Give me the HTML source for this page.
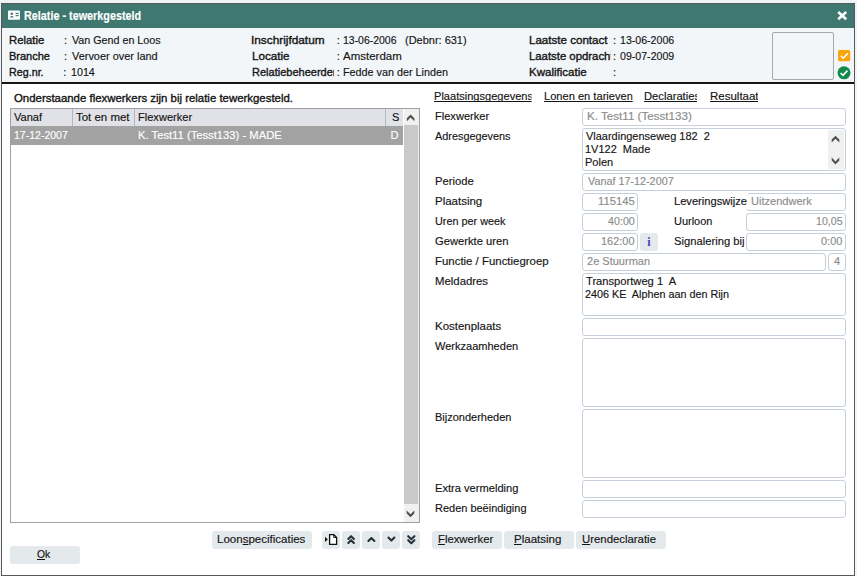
<!DOCTYPE html>
<html><head><meta charset="utf-8"><title>Relatie - tewerkgesteld</title>
<style>
*{box-sizing:border-box;margin:0;padding:0}
html,body{width:857px;height:576px;overflow:hidden;background:#f0f3f5;font-family:"Liberation Sans",sans-serif;font-size:11px;color:#141414}
.a{position:absolute;white-space:nowrap;line-height:14px;transform-origin:0 0;-webkit-text-stroke:0.15px currentColor}
.p{position:absolute}
.b{font-weight:bold}
.m{-webkit-text-stroke:0.35px currentColor}
.f{position:absolute;border:1px solid #c6d0da;border-radius:3px;background:#fff;height:18px}
.btn{position:absolute;height:18px;background:#e4e9ec;border-radius:3px}
u{text-decoration:underline;text-underline-offset:1px;text-decoration-skip-ink:none}
</style></head><body>
<div class="p" style="left:1px;top:3px;width:854px;height:573px;border:1px solid #595959;background:#fff"></div>
<div class="p" style="left:2px;top:4px;width:852px;height:24px;background:#3e7870"></div>
<div class="p" style="left:2px;top:28px;width:852px;height:55px;background:#f2f6f9"></div>
<div class="p" style="left:2px;top:82.4px;width:852px;height:1.25px;background:#161616"></div>

<!-- title icons -->
<svg class="p" style="left:8px;top:10px" width="13" height="10" viewBox="0 0 13 10"><rect x="0" y="0.4" width="12" height="9.4" rx="1" fill="#fff"/><circle cx="3.8" cy="3.7" r="1.25" fill="#3e7870"/><path d="M1.7 7.4 q2.1-2.8 4.2 0z" fill="#3e7870"/><rect x="7.6" y="2.9" width="3.2" height="1.1" fill="#3e7870"/><rect x="7.6" y="5.1" width="3.2" height="1.1" fill="#3e7870"/></svg>
<svg class="p" style="left:836px;top:10px" width="12" height="11" viewBox="0 0 12 11"><path d="M2.2 2 L10.2 9.3 M10.2 2 L2.2 9.3" stroke="#fff" stroke-width="2.6"/></svg>

<!-- header image box + status icons -->
<div class="p" style="left:772px;top:32px;width:62px;height:48px;border:1px solid #a6a8ab;border-radius:2px;background:#f2f6f9"></div>
<svg class="p" style="left:838px;top:50px" width="13" height="12" viewBox="0 0 13 12"><rect x="0" y="0" width="12.2" height="11.3" rx="1.5" fill="#f9a40a"/><path d="M2.8 5.8 L5.2 8.2 L9.8 3.4" stroke="#fff" stroke-width="1.6" fill="none"/></svg>
<svg class="p" style="left:837px;top:66px" width="14" height="14" viewBox="0 0 14 14"><circle cx="7" cy="6.8" r="6.5" fill="#0f8a4a"/><path d="M3.6 7 L6 9.4 L10.4 4.7" stroke="#fff" stroke-width="1.7" fill="none"/></svg>

<!-- grid -->
<div class="p" style="left:10px;top:108px;width:410px;height:415px;border:1px solid #a0a0a0;background:#fff"></div>
<div class="p" style="left:11px;top:109px;width:391.5px;height:17px;background:#e0e2e7"></div>
<div class="p" style="left:72px;top:109px;width:1px;height:17px;background:#b4b7bd"></div>
<div class="p" style="left:134px;top:109px;width:1px;height:17px;background:#b4b7bd"></div>
<div class="p" style="left:385px;top:109px;width:1px;height:17px;background:#b4b7bd"></div>
<div class="p" style="left:11px;top:126px;width:391.5px;height:18.6px;background:#a2a2a2"></div>
<div class="p" style="left:402.5px;top:109px;width:1.5px;height:413px;background:#fff"></div>
<div class="p" style="left:403.7px;top:109px;width:15.3px;height:413px;background:#f0f0f0"></div>
<div class="p" style="left:404.4px;top:125px;width:13.3px;height:378.6px;background:#c9c9c9"></div>
<svg class="p" style="left:400px;top:109px" width="20" height="20" viewBox="400 109 20 20"><path d="M406.8 118.3 L410.6 114.5 L414.4 118.3 V121.3 L410.6 117.5 L406.8 121.3z" fill="#4f4f4f"/></svg>
<svg class="p" style="left:400px;top:505px" width="20" height="16" viewBox="400 505 20 16"><path d="M406.7 510.4 L410.5 514.2 L414.3 510.4 V513.4 L410.5 517.2 L406.7 513.4z" fill="#4f4f4f"/></svg>

<!-- bottom-left buttons -->
<div class="btn" style="left:212px;top:531px;width:100px"></div>
<div class="btn" style="left:322px;top:531px;width:18px"></div>
<div class="btn" style="left:342px;top:531px;width:18px"></div>
<div class="btn" style="left:362px;top:531px;width:18px"></div>
<div class="btn" style="left:382px;top:531px;width:18px"></div>
<div class="btn" style="left:402px;top:531px;width:18px"></div>
<svg class="p" style="left:324px;top:533px" width="15" height="13" viewBox="0 0 15 13"><path d="M1 3.8 L3.8 6.4 L1 9z" fill="#111"/><path d="M5.6 1.7 h4.3 l2.7 2.7 v7 h-7z" stroke="#111" stroke-width="1.3" fill="#fff"/><path d="M9.8 1.8 v2.7 h2.7" stroke="#111" stroke-width="1" fill="none"/></svg>
<svg class="p" style="left:346px;top:534px" width="10" height="11" viewBox="0 0 10 11"><path d="M2.3 5 L5.1 2.2 L7.9 5 M2.3 9 L5.1 6.2 L7.9 9" stroke="#263238" stroke-width="2.1" fill="none" stroke-linecap="round" stroke-linejoin="round"/></svg>
<svg class="p" style="left:366px;top:535px" width="10" height="9" viewBox="0 0 10 9"><path d="M2.4 6 L5.4 3 L8.4 6" stroke="#263238" stroke-width="2.1" fill="none" stroke-linecap="round" stroke-linejoin="round"/></svg>
<svg class="p" style="left:386px;top:535px" width="10" height="9" viewBox="0 0 10 9"><path d="M2.4 2.6 L5.4 5.6 L8.4 2.6" stroke="#263238" stroke-width="2.1" fill="none" stroke-linecap="round" stroke-linejoin="round"/></svg>
<svg class="p" style="left:406px;top:534px" width="10" height="11" viewBox="0 0 10 11"><path d="M2.2 2.2 L5.3 5.2 L8.4 2.2 M2.2 6.2 L5.3 9.2 L8.4 6.2" stroke="#263238" stroke-width="2.1" fill="none" stroke-linecap="round" stroke-linejoin="round"/></svg>
<div class="btn" style="left:10px;top:546px;width:70px"></div>

<!-- form fields -->
<div class="f" style="left:582px;top:108px;width:264px"></div>
<div class="f" style="left:582px;top:128px;width:264px;height:43px"></div>
<div class="p" style="left:828px;top:130px;width:16px;height:38.6px;background:#f0f0f0"></div>
<svg class="p" style="left:826px;top:130px" width="20" height="40" viewBox="826 130 20 40"><path d="M831.7 139.6 L835.5 135.8 L839.3 139.6 V142.6 L835.5 138.8 L831.7 142.6z M831.7 157.6 L835.5 161.4 L839.3 157.6 V160.6 L835.5 164.4 L831.7 160.6z" fill="#4f4f4f"/></svg>
<div class="f" style="left:582px;top:173px;width:264px"></div>
<div class="f" style="left:582px;top:193px;width:56px"></div>
<div class="f" style="left:746px;top:193px;width:100px"></div>
<div class="p" style="left:740px;top:193px;width:7.6px;height:15.5px;background:#fff"></div>
<div class="f" style="left:582px;top:213px;width:56px"></div>
<div class="f" style="left:746px;top:213px;width:100px"></div>
<div class="f" style="left:582px;top:233px;width:56px"></div>
<div class="btn" style="left:640px;top:233px;width:18px"></div>
<div class="f" style="left:746px;top:233px;width:100px"></div>
<div class="f" style="left:582px;top:253px;width:244px"></div>
<div class="f" style="left:828px;top:253px;width:18px"></div>
<div class="f" style="left:582px;top:273px;width:264px;height:43px"></div>
<div class="f" style="left:582px;top:318px;width:264px"></div>
<div class="f" style="left:582px;top:338px;width:264px;height:69px"></div>
<div class="f" style="left:582px;top:409px;width:264px;height:69px"></div>
<div class="f" style="left:582px;top:480px;width:264px"></div>
<div class="f" style="left:582px;top:500px;width:264px"></div>
<div class="a" style="left:647.3px;top:234.5px;font-family:'Liberation Serif',serif;font-weight:bold;color:#4a3fc0;font-size:12px;-webkit-text-stroke:0">i</div>

<div class="btn" style="left:432px;top:531px;width:70px"></div>
<div class="btn" style="left:504px;top:531px;width:70px"></div>
<div class="btn" style="left:576px;top:531px;width:90px"></div>

<div class="a b" style="left:23.71px;top:9px;transform:scaleX(0.9013);color:#fff;font-size:12px">Relatie - tewerkgesteld</div>
<div class="a m" style="left:8.58px;top:33px;transform:scaleX(1.0278);">Relatie</div>
<div class="a" style="left:64.05px;top:33px;transform:scaleX(1.0000);">:</div>
<div class="a" style="left:71.83px;top:33px;transform:scaleX(0.9741);">Van Gend en Loos</div>
<div class="a m" style="left:8.60px;top:49px;transform:scaleX(0.9998);">Branche</div>
<div class="a" style="left:64.05px;top:49px;transform:scaleX(1.0000);">:</div>
<div class="a" style="left:71.84px;top:49px;transform:scaleX(0.9930);">Vervoer over land</div>
<div class="a m" style="left:8.62px;top:65px;transform:scaleX(0.9753);">Reg.nr.</div>
<div class="a" style="left:63.25px;top:65px;transform:scaleX(1.0000);">:</div>
<div class="a" style="left:71.47px;top:65px;transform:scaleX(0.9729);">1014</div>
<div class="a m" style="left:251.45px;top:33px;transform:scaleX(1.0741);">Inschrijfdatum</div>
<div class="a" style="left:336.85px;top:33px;transform:scaleX(1.0000);">:</div>
<div class="a" style="left:343.19px;top:33px;transform:scaleX(0.9503);">13-06-2006</div>
<div class="a" style="left:404.57px;top:33px;transform:scaleX(0.9981);">(Debnr: 631)</div>
<div class="a m" style="left:251.56px;top:49px;transform:scaleX(1.0574);">Locatie</div>
<div class="a" style="left:336.85px;top:49px;transform:scaleX(1.0000);">:</div>
<div class="a" style="left:342.94px;top:49px;transform:scaleX(1.0444);">Amsterdam</div>
<div class="a m" style="left:251.80px;top:65px;transform:scaleX(1.0014);;width:81.69px;overflow:hidden">Relatiebeheerder</div>
<div class="a" style="left:336.85px;top:65px;transform:scaleX(1.0000);">:</div>
<div class="a" style="left:343.18px;top:65px;transform:scaleX(0.9808);">Fedde van der Linden</div>
<div class="a m" style="left:528.77px;top:33px;transform:scaleX(1.0519);">Laatste contact</div>
<div class="a" style="left:613.05px;top:33px;transform:scaleX(1.0000);">:</div>
<div class="a" style="left:619.78px;top:33px;transform:scaleX(0.9629);">13-06-2006</div>
<div class="a m" style="left:528.78px;top:49px;transform:scaleX(1.0314);;width:79.14px;overflow:hidden">Laatste opdracht</div>
<div class="a" style="left:613.05px;top:49px;transform:scaleX(1.0000);">:</div>
<div class="a" style="left:619.78px;top:49px;transform:scaleX(0.9633);">09-07-2009</div>
<div class="a m" style="left:528.77px;top:65px;transform:scaleX(1.0483);">Kwalificatie</div>
<div class="a" style="left:613.05px;top:65px;transform:scaleX(1.0000);">:</div>
<div class="a m" style="left:13.71px;top:91px;transform:scaleX(1.0370);">Onderstaande flexwerkers zijn bij relatie tewerkgesteld.</div>
<div class="a" style="left:14.34px;top:110px;transform:scaleX(1.0035);">Vanaf</div>
<div class="a" style="left:76.31px;top:110px;transform:scaleX(1.0420);">Tot en met</div>
<div class="a" style="left:137.66px;top:110px;transform:scaleX(1.0058);">Flexwerker</div>
<div class="a" style="left:391.89px;top:110px;transform:scaleX(1.0000);">S</div>
<div class="a" style="left:13.98px;top:128px;transform:scaleX(0.9562);color:#fff">17-12-2007</div>
<div class="a" style="left:138.15px;top:128px;transform:scaleX(1.0207);color:#fff">K. Test11 (Tesst133) - MADE</div>
<div class="a" style="left:390.40px;top:128px;transform:scaleX(1.0000);color:#fff">D</div>
<div class="a" style="left:433.76px;top:89px;transform:scaleX(1.0061);height:13px;width:96.95px;overflow:hidden"><u>Plaatsingsgegevens</u></div>
<div class="a" style="left:543.76px;top:89px;transform:scaleX(1.0089);height:13px;overflow:hidden"><u>Lonen en tarieven</u></div>
<div class="a" style="left:643.75px;top:89px;transform:scaleX(1.0187);height:13px;width:52.27px;overflow:hidden"><u>Declaraties</u></div>
<div class="a" style="left:709.53px;top:89px;transform:scaleX(1.0450);height:13px;overflow:hidden"><u>Resultaat</u></div>
<div class="a" style="left:434.66px;top:109px;transform:scaleX(1.0058);">Flexwerker</div>
<div class="a" style="left:435.04px;top:129px;transform:scaleX(0.9876);">Adresgegevens</div>
<div class="a" style="left:434.65px;top:174px;transform:scaleX(1.0193);">Periode</div>
<div class="a" style="left:434.63px;top:194px;transform:scaleX(1.0431);">Plaatsing</div>
<div class="a" style="left:434.71px;top:214px;transform:scaleX(0.9856);">Uren per week</div>
<div class="a" style="left:434.88px;top:234px;transform:scaleX(1.0176);">Gewerkte uren</div>
<div class="a" style="left:434.64px;top:254px;transform:scaleX(1.0381);">Functie / Functiegroep</div>
<div class="a" style="left:434.64px;top:274px;transform:scaleX(1.0330);">Meldadres</div>
<div class="a" style="left:434.63px;top:319px;transform:scaleX(1.0421);">Kostenplaats</div>
<div class="a" style="left:435.04px;top:339px;transform:scaleX(1.0023);">Werkzaamheden</div>
<div class="a" style="left:434.67px;top:410px;transform:scaleX(0.9987);">Bijzonderheden</div>
<div class="a" style="left:434.66px;top:481px;transform:scaleX(1.0113);">Extra vermelding</div>
<div class="a" style="left:434.67px;top:501px;transform:scaleX(0.9975);">Reden beëindiging</div>
<div class="a" style="left:673.86px;top:194px;transform:scaleX(1.0114);">Leveringswijze</div>
<div class="a" style="left:673.90px;top:214px;transform:scaleX(0.9967);">Uurloon</div>
<div class="a" style="left:673.95px;top:234px;transform:scaleX(1.0209);">Signalering bij</div>
<div class="a" style="left:586.62px;top:109px;transform:scaleX(1.0557);color:#8c8c8c">K. Test11 (Tesst133)</div>
<div class="a" style="left:587.53px;top:174px;transform:scaleX(0.9815);color:#8c8c8c">Vanaf 17-12-2007</div>
<div class="a" style="left:597.83px;top:194px;transform:scaleX(1.0235);color:#8c8c8c">115145</div>
<div class="a" style="left:607.53px;top:214px;transform:scaleX(0.9741);color:#8c8c8c">40:00</div>
<div class="a" style="left:600.95px;top:234px;transform:scaleX(0.9963);color:#8c8c8c">162:00</div>
<div class="a" style="left:750.70px;top:194px;transform:scaleX(1.0048);color:#8c8c8c">Uitzendwerk</div>
<div class="a" style="left:815.67px;top:214px;transform:scaleX(0.9662);color:#8c8c8c">10,05</div>
<div class="a" style="left:820.96px;top:234px;transform:scaleX(0.9963);color:#8c8c8c">0:00</div>
<div class="a" style="left:586.80px;top:254px;transform:scaleX(1.0020);color:#8c8c8c">2e Stuurman</div>
<div class="a" style="left:834.08px;top:254px;transform:scaleX(1.0000);color:#8c8c8c">4</div>
<div class="a" style="left:585.74px;top:129px;transform:scaleX(0.9975);">Vlaardingenseweg 182&nbsp; 2</div>
<div class="a" style="left:584.85px;top:142px;transform:scaleX(0.9977);">1V122&nbsp; Made</div>
<div class="a" style="left:584.87px;top:155px;transform:scaleX(1.0026);">Polen</div>
<div class="a" style="left:585.71px;top:274px;transform:scaleX(1.0142);">Transportweg 1&nbsp; A</div>
<div class="a" style="left:585.11px;top:287px;transform:scaleX(0.9810);">2406 KE&nbsp; Alphen aan den Rijn</div>
<div class="a" style="left:216.53px;top:532px;transform:scaleX(1.0471);">Loon<u>s</u>pecificaties</div>
<div class="a" style="left:437.95px;top:532px;transform:scaleX(1.0267);"><u>F</u>lexwerker</div>
<div class="a" style="left:513.83px;top:532px;transform:scaleX(1.0476);"><u>P</u>laatsing</div>
<div class="a" style="left:582.37px;top:532px;transform:scaleX(1.0337);"><u>U</u>rendeclaratie</div>
<div class="a" style="left:36.55px;top:547px;transform:scaleX(0.9425);"><u>O</u>k</div>
</body></html>
